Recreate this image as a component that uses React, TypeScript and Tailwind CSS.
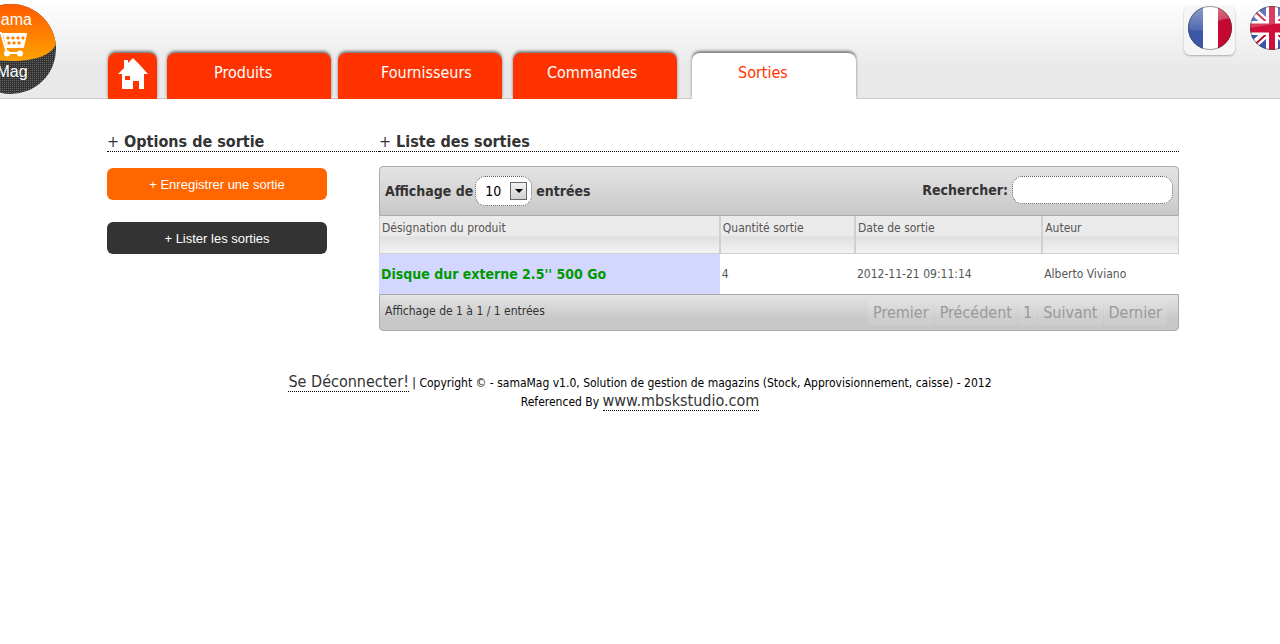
// App.tsx
import React from 'react';

interface Tab {
  label: string;
  className: string;
}

interface Sortie {
  produit: string;
  quantite: number;
  date: string;
  auteur: string;
}

const tabs: Tab[] = [
  { label: 'Produits', className: 'ml-[10px] pl-[47px] bg-[#ff3300] text-white' },
  { label: 'Fournisseurs', className: 'ml-[7px] pl-[43px] bg-[#ff3300] text-white' },
  { label: 'Commandes', className: 'ml-[11px] pl-[34px] bg-[#ff3300] text-white' },
  { label: 'Sorties', className: 'ml-[15px] pl-[46px] bg-white text-[#ff3300]' },
];

const sorties: Sortie[] = [
  { produit: "Disque dur externe 2.5'' 500 Go", quantite: 4, date: '2012-11-21 09:11:14', auteur: 'Alberto Viviano' },
];

const pages = ['Premier', 'Précédent', '1', 'Suivant', 'Dernier'];

const cartHoles = [
  [42, 34], [47, 34], [52, 34], [57, 34],
  [43, 39], [48, 39], [53, 39],
];

const Logo: React.FC = () => (
  <a href="#accueil" aria-label="Sama Mag" className="block shrink-0 -ml-[34px] mt-1">
    <svg width="90" height="90" viewBox="0 0 90 90">
      <defs>
        <linearGradient id="logoOrange" x1="0" y1="0" x2="0" y2="1">
          <stop offset="0" stopColor="#ff5a00" />
          <stop offset="1" stopColor="#ffa200" />
        </linearGradient>
        <pattern id="logoDots" width="2" height="2" patternUnits="userSpaceOnUse">
          <rect width="2" height="2" fill="#333" />
          <rect width="1" height="1" fill="#666" />
        </pattern>
        <clipPath id="logoClip">
          <circle cx="45" cy="45" r="45" />
        </clipPath>
      </defs>
      <g clipPath="url(#logoClip)">
        <rect width="90" height="90" fill="url(#logoDots)" />
        <path d="M0 0H90V40C86 50 72 57 45 57S4 50 0 40Z" fill="url(#logoOrange)" />
      </g>
      <path d="M30 29H35L41 49H54M36 30H60L57 43H40" fill="none" stroke="#fff" strokeWidth="2" strokeLinejoin="round" />
      <path d="M37 31H60L57 42H40Z" fill="#fff" />
      {cartHoles.map(([x, y]) => (
        <rect key={`${x}-${y}`} x={x - 1.5} y={y - 1.5} width="3" height="3" rx="1" fill="#ff8000" />
      ))}
      <circle cx="41" cy="49.5" r="3" fill="#fff" />
      <circle cx="54" cy="49.5" r="3" fill="#fff" />
      <text x="45" y="21" textAnchor="middle" fontFamily="Liberation Sans, sans-serif" fontSize="16" fill="#fff">
        Sama
      </text>
      <text x="46" y="73" textAnchor="middle" fontFamily="Liberation Sans, sans-serif" fontSize="16" fill="#fff">
        Mag
      </text>
    </svg>
  </a>
);

const HomeIcon: React.FC = () => (
  <svg width="30" height="32" viewBox="0 0 30 32" fill="#fff">
    <path fillRule="evenodd" d="M15 0L20 5L30 16H26V31H21V23H15V31H4V16H0L6 10V2H10V5ZM7 18V22H12V18Z" />
  </svg>
);

const FranceFlag: React.FC = () => (
  <svg width="46" height="46" viewBox="0 0 46 46">
    <defs>
      <clipPath id="frClip">
        <circle cx="23" cy="23" r="22" />
      </clipPath>
      <linearGradient id="gloss" x1="0" y1="0" x2="0" y2="1">
        <stop offset="0" stopColor="#fff" stopOpacity="0.45" />
        <stop offset="1" stopColor="#fff" stopOpacity="0.1" />
      </linearGradient>
    </defs>
    <g clipPath="url(#frClip)">
      <rect width="46" height="46" fill="#fff" />
      <rect width="16" height="46" fill="#3c56a8" />
      <rect x="31" width="15" height="46" fill="#c4082f" />
      <path d="M0 0H46V13C34 14 24 18 19 24C13 27 6 26 0 23Z" fill="url(#gloss)" />
    </g>
    <circle cx="23" cy="23" r="21.5" fill="none" stroke="#333" strokeOpacity="0.5" />
  </svg>
);

const UkFlag: React.FC = () => (
  <svg width="46" height="46" viewBox="0 0 46 46">
    <defs>
      <clipPath id="ukClip">
        <circle cx="23" cy="23" r="22" />
      </clipPath>
    </defs>
    <g clipPath="url(#ukClip)">
      <rect width="46" height="46" fill="#3c56a8" />
      <path d="M0 2L46 44M46 2L0 44" stroke="#fff" strokeWidth="8" />
      <path d="M0 1L23 22M46 1L23 22M0 45L23 24M46 45L23 24" stroke="#c4082f" strokeWidth="2" />
      <path d="M23 0V46" stroke="#fff" strokeWidth="12" />
      <path d="M0 23H46" stroke="#fff" strokeWidth="14" />
      <path d="M23 0V46" stroke="#d0103a" strokeWidth="6" />
      <path d="M0 23H46" stroke="#d0103a" strokeWidth="9" />
      <path d="M0 0H46V16C30 17 18 21 0 23Z" fill="#fff" fillOpacity="0.2" />
    </g>
    <circle cx="23" cy="23" r="21.5" fill="none" stroke="#333" strokeOpacity="0.5" />
  </svg>
);

const Header: React.FC = () => (
  <header className="grid grid-cols-[minmax(0,1fr)_minmax(0,1078px)_minmax(0,1fr)] h-[99px] border-b border-[#c8c8c8] bg-linear-to-b from-white to-[#e9e9e9] to-70%">
    <Logo />

    {/* Tabs */}
    <nav className="flex items-end pl-[7px] -mb-px pt-10 overflow-hidden text-base">
      <a
        href="#accueil"
        aria-label="Accueil"
        className="flex justify-center w-[49px] h-[46px] pt-[5px] rounded-t-lg bg-[#ff3300] shadow-[0_-2px_3px_#777]"
      >
        <HomeIcon />
      </a>
      {tabs.map((tab) => (
        <a
          key={tab.label}
          href={`#${tab.label.toLowerCase()}`}
          className={`w-[164px] h-[46px] pt-2 rounded-t-lg shadow-[0_-2px_3px_#777] ${tab.className}`}
        >
          {tab.label}
        </a>
      ))}
    </nav>

    {/* Languages */}
    <div className="flex items-start gap-[14px] pl-[5px] pt-[6px] overflow-hidden">
      <button
        type="button"
        aria-label="Français"
        className="flex shrink-0 justify-center w-[51px] h-[49px] rounded-md bg-[#f5f5f5] shadow-[0_1px_2px_#aaa]"
      >
        <span className="-mt-px">
          <FranceFlag />
        </span>
      </button>
      <button type="button" aria-label="English" className="shrink-0 -mt-px">
        <UkFlag />
      </button>
    </div>
  </header>
);

const SectionTitle: React.FC<{ children: React.ReactNode }> = ({ children }) => (
  <h2 className="h-5 border-b border-dotted border-black text-base leading-5 font-bold text-[#333]">
    <span className="font-normal">+</span> {children}
  </h2>
);

const SortiesTable: React.FC = () => (
  <div className="mt-[14px]">
    {/* Toolbar */}
    <div className="flex justify-between items-start h-[50px] px-[5px] pt-[9px] rounded-t border border-[#aaa] bg-linear-to-b from-[#e4e4e4] to-[#c8c8c8] text-sm font-bold text-[#333]">
      <label className="flex items-center gap-[2px]">
        Affichage de
        <span className="relative flex">
          <select
            defaultValue="10"
            className="appearance-none w-[57px] h-[30px] pl-[9px] rounded-[10px] border border-dotted border-[#555] bg-white text-sm font-normal text-black"
          >
            <option>10</option>
            <option>25</option>
            <option>50</option>
            <option>100</option>
          </select>
          <span className="absolute right-[5px] top-[6px] flex items-center justify-center w-[17px] h-[18px] border border-[#666] bg-linear-to-b from-[#f2f2f2] to-[#d0d0d0] pointer-events-none">
            <svg width="8" height="4" viewBox="0 0 8 4">
              <path d="M0 0H8L4 4Z" />
            </svg>
          </span>
        </span>
        <span className="pl-[2px]">entrées</span>
      </label>
      <label className="flex items-center gap-1">
        Rechercher:
        <input
          type="text"
          className="w-[161px] h-7 px-2 rounded-[10px] border border-dotted border-[#555] bg-white font-normal"
        />
      </label>
    </div>

    <table className="w-full table-fixed border-separate border-spacing-0 text-xs text-[#555]">
      <colgroup>
        <col className="w-[42.6%]" />
        <col className="w-[16.9%]" />
        <col className="w-[23.4%]" />
        <col />
      </colgroup>
      <thead>
        <tr className="h-[38px] bg-linear-to-b from-[#ebebeb] from-50% via-[#e0e0e0] via-55% to-[#f4f4f4]">
          {['Désignation du produit', 'Quantité sortie', 'Date de sortie', 'Auteur'].map((title) => (
            <th key={title} className="pl-[2px] pt-1 border-x border-b border-[#d0d0d0] text-left align-top font-normal">
              {title}
            </th>
          ))}
        </tr>
      </thead>
      <tbody>
        {sorties.map((sortie) => (
          <tr key={sortie.date} className="h-10">
            <td className="pl-[2px] bg-[#d3d6ff] text-sm font-bold text-[#009900]">{sortie.produit}</td>
            <td className="pl-[2px]">{sortie.quantite}</td>
            <td className="pl-[2px]">{sortie.date}</td>
            <td className="pl-[2px]">{sortie.auteur}</td>
          </tr>
        ))}
      </tbody>
    </table>

    {/* Pagination */}
    <div className="flex justify-between h-[37px] pl-[5px] pr-[11px] rounded-b border border-[#aaa] bg-linear-to-b from-[#e4e4e4] to-[#c8c8c8] to-70%">
      <p className="pt-2 text-xs text-[#333]">Affichage de 1 à 1 / 1 entrées</p>
      <div className="flex gap-px pt-[6px] text-base text-[#999]">
        {pages.map((page) => (
          <button key={page} type="button" className="h-6 px-[5px] rounded-xs bg-white/10">
            {page}
          </button>
        ))}
      </div>
    </div>
  </div>
);

const Footer: React.FC = () => (
  <footer className="mt-[43px] text-center text-xs leading-[19px] text-black">
    <p>
      <a href="#deconnexion" className="border-b border-dotted border-black text-base leading-4 text-[#333]">
        Se Déconnecter!
      </a>{' '}
      | Copyright © - samaMag v1.0, Solution de gestion de magazins (Stock, Approvisionnement, caisse) - 2012
    </p>
    <p>
      Referenced By{' '}
      <a href="#mbskstudio" className="border-b border-dotted border-black text-base leading-4 text-[#333]">
        www.mbskstudio.com
      </a>
    </p>
  </footer>
);

const App: React.FC = () => {
  return (
    <div className="min-h-screen bg-white font-['DejaVu_Sans_Condensed','DejaVu_Sans',sans-serif]">
      <Header />
      <div className="flex max-w-[1078px] mx-auto pl-[6px] pt-[33px]">
        <aside className="w-[272px] shrink-0">
          <SectionTitle>Options de sortie</SectionTitle>
          <div className="flex flex-col gap-[22px] w-[220px] mt-4 font-['Liberation_Sans',sans-serif] text-[13px] text-white">
            <button type="button" className="h-8 pt-px rounded-md bg-[#ff6600]">
              + Enregistrer une sortie
            </button>
            <button type="button" className="h-8 pt-px rounded-md bg-[#333]">
              + Lister les sorties
            </button>
          </div>
        </aside>
        <main className="flex-1 min-w-0">
          <SectionTitle>Liste des sorties</SectionTitle>
          <SortiesTable />
        </main>
      </div>
      <Footer />
    </div>
  );
};

export default App;
